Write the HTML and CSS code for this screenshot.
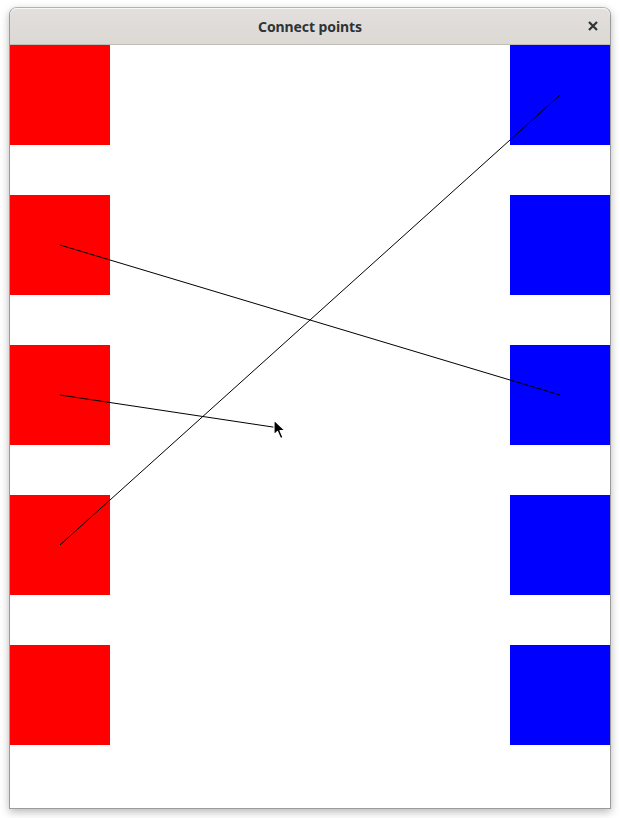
FILE: index.html
```html
<!DOCTYPE html>
<html>
<head>
<meta charset="utf-8">
<title>Connect points</title>
<link rel="stylesheet" href="styles.css">
</head>
<body>
<div class="window">
  <header class="titlebar">
    <span class="title">Connect points</span>
    <button class="close" aria-label="Close">
      <svg width="10" height="10" viewBox="0 0 10 10"><path d="M1 1 L9 9 M9 1 L1 9" stroke="#2e3436" stroke-width="2.2" stroke-linecap="butt"/></svg>
    </button>
  </header>
  <main class="canvas">
    <div class="column">
      <div class="sq red"></div>
      <div class="sq red"></div>
      <div class="sq red"></div>
      <div class="sq red"></div>
      <div class="sq red"></div>
    </div>
    <div class="column">
      <div class="sq blue"></div>
      <div class="sq blue"></div>
      <div class="sq blue"></div>
      <div class="sq blue"></div>
      <div class="sq blue"></div>
    </div>
    <svg class="lines" width="600" height="763" viewBox="0 0 600 763">
      <line x1="50" y1="500" x2="550" y2="50" stroke="#000" stroke-width="1"/>
      <line x1="50" y1="200" x2="550" y2="350" stroke="#000" stroke-width="1"/>
      <line x1="50" y1="350" x2="266" y2="382.5" stroke="#000" stroke-width="1"/>
    </svg>
    <svg class="cursor" width="14" height="21" viewBox="0 0 14 21">
      <path d="M1 1 L1 16 L4.5 12.5 L7.5 19.5 L10 18.5 L7 11.5 L12 11.5 Z" fill="#000" stroke="#fff" stroke-width="1.2" stroke-linejoin="round"/>
    </svg>
  </main>
</div>
</body>
</html>
```
FILE: styles.css
```css
html, body {
  margin: 0;
  padding: 0;
  background: #ffffff;
}
body {
  width: 620px;
  height: 818px;
  overflow: hidden;
}
.window {
  margin: 7px 0 0 9px;
  width: 600px;
  border: 1px solid #9b9b9b;
  border-top-color: #b5b2ae;
  border-radius: 8px 8px 0 0;
  box-shadow: 0 3px 9px rgba(0,0,0,0.28);
  background: #fff;
}
.titlebar {
  height: 36px;
  border-bottom: 1px solid #c0bbb5;
  border-radius: 7px 7px 0 0;
  background: linear-gradient(#e2dfdc, #dcd9d5);
  display: flex;
  align-items: center;
  justify-content: center;
  position: relative;
  box-shadow: inset 0 1px 0 rgba(255,255,255,0.7);
}
.title {
  font-family: "Noto Sans", "Open Sans", sans-serif;
  font-weight: 700;
  font-size: 14px;
  color: #2e3436;
  letter-spacing: -0.1px;
}
.close {
  position: absolute;
  right: 12px;
  top: 13px;
  border: 0;
  padding: 0;
  background: transparent;
  width: 10px;
  height: 10px;
  display: flex;
}
.canvas {
  position: relative;
  height: 763px;
  display: flex;
  justify-content: space-between;
  background: #fff;
}
.column {
  display: flex;
  flex-direction: column;
  gap: 50px;
}
.sq {
  width: 100px;
  height: 100px;
}
.red { background: #ff0000; }
.blue { background: #0000ff; }
.lines {
  position: absolute;
  left: 0;
  top: 0;
}
.cursor {
  position: absolute;
  left: 263px;
  top: 374px;
}
```
